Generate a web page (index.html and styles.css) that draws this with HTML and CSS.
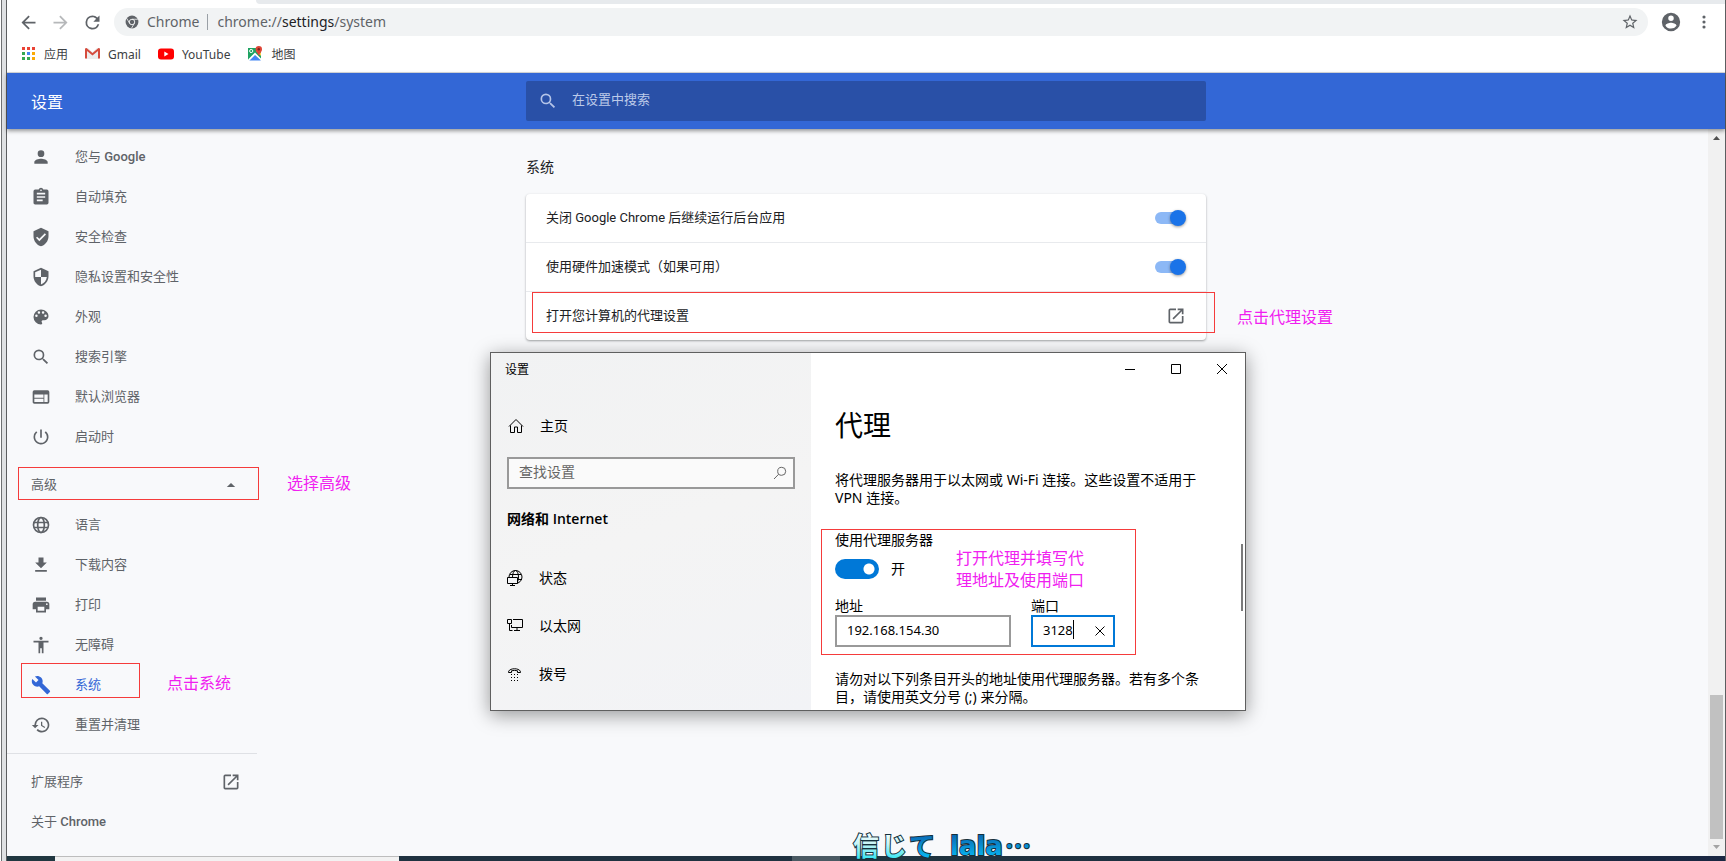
FILE: index.html
```html
<!DOCTYPE html>
<html lang="zh-CN">
<head>
<meta charset="utf-8">
<title>设置 - 系统</title>
<link rel="stylesheet" href="styles.css">
</head>
<body>
<div class="edge"></div>
<div class="browser">
  <div class="tabstrip"><div class="tab"></div><div class="tabs-rest"></div></div>
  <div class="toolbar">
    <button class="tool" aria-label="后退"><svg width="21" height="21" viewBox="0 0 24 24"><path d="M20 11H7.830l5.590-5.590L12 4l-8 8 8 8 1.410-1.410L7.830 13H20z"/></svg></button>
    <button class="tool faded" aria-label="前进"><svg width="21" height="21" viewBox="0 0 24 24"><path d="M12 4l-1.410 1.410L16.170 11H4v2h12.170l-5.580 5.590L12 20l8-8z"/></svg></button>
    <button class="tool" aria-label="重新加载"><svg width="21" height="21" viewBox="0 0 24 24"><path d="M17.650 6.350A7.960 7.960 0 0 0 12 4a8 8 0 1 0 7.730 10h-2.080A6 6 0 1 1 12 6c1.660 0 3.140.690 4.220 1.780L13 11h7V4z"/></svg></button>
    <div class="omnibox">
      <svg class="site" width="14" height="14" viewBox="0 0 24 24"><circle cx="12" cy="12" r="11"/><circle cx="12" cy="12" r="4.700" fill="none" stroke="#f1f3f4" stroke-width="1.600"/><path d="M12 7.300h10M8 14.400L3 5.800M16 14.300l-5 8.700" fill="none" stroke="#f1f3f4" stroke-width="1.400"/></svg>
      <span class="origin">Chrome</span>
      <span class="url">chrome://<b>settings</b>/system</span>
      <button class="tool star" aria-label="收藏"><svg width="18" height="18" viewBox="0 0 24 24"><path d="M22 9.240l-7.190-.620L12 2 9.190 8.630 2 9.240l5.460 4.730L5.820 21 12 17.270 18.180 21l-1.630-7.030L22 9.240zM12 15.400l-3.760 2.270 1-4.280-3.320-2.880 4.380-.380L12 6.100l1.710 4.040 4.380.380-3.320 2.880 1 4.280z"/></svg></button>
    </div>
    <button class="tool avatar" aria-label="用户"><svg width="22" height="22" viewBox="0 0 24 24"><path d="M12 2a10 10 0 1 0 0 20 10 10 0 0 0 0-20zm0 3a3 3 0 1 1 0 6 3 3 0 0 1 0-6zm0 14.200a7.200 7.200 0 0 1-6-3.220c.03-1.990 4-3.080 6-3.080s5.970 1.090 6 3.080a7.200 7.200 0 0 1-6 3.220z"/></svg></button>
    <button class="tool" aria-label="菜单"><svg width="20" height="20" viewBox="0 0 24 24"><circle cx="12" cy="6" r="1.900"/><circle cx="12" cy="12" r="1.900"/><circle cx="12" cy="18" r="1.900"/></svg></button>
  </div>
  <nav class="bookmarks">
    <a href="#"><svg width="14" height="14" viewBox="0 0 14 14"><path fill="#ea4335" d="M0 0h3v3H0zM5 0h3v3H5zM10 0h3v3h-3z"/><path fill="#34a853" d="M0 5h3v3H0zM0 10h3v3H0zM5 10h3v3H5z"/><path fill="#4285f4" d="M5 5h3v3H5z"/><path fill="#fbaa05" d="M10 5h3v3h-3zM10 10h3v3h-3z"/></svg>应用</a>
    <a href="#"><svg width="15" height="14" viewBox="0 0 15 14"><path fill="#eceded" d="M1 1h13v11H1z"/><path fill="#fff" d="M3 1h9L7.500 5z"/><path fill="#d54b3d" d="M0 2Q0 1 1.500 1L7.500 6l6-5Q15 1 15 2v9.500h-2V4L7.500 8.500 2 4v7.500H0z"/></svg>Gmail</a>
    <a href="#"><svg width="16" height="14" viewBox="0 0 16 14"><rect y="1.500" width="16" height="11" rx="3" fill="#f00"/><path fill="#fff" d="M6.300 4.600v4.800L10.500 7z"/></svg>YouTube</a>
    <a href="#"><svg width="16" height="16" viewBox="0 0 16 16"><path fill="#1ea362" d="M1 2h13v12H1z"/><path fill="#4285f4" d="M7.500 8.500l6.500 6H2z"/><path fill="#fff" d="M1 13.500l7-7 7 7-1 1-6-5.500-6 6z"/><path fill="#ffd04b" d="M9 5l5 5V7l-3-3z"/><circle cx="4.200" cy="5" r="1.600" fill="none" stroke="#fff"/><path fill="#de4436" d="M11.800 0a3.200 3.200 0 0 1 3.200 3.200c0 2.800-2.400 3.500-3.200 7-.8-3.500-3.200-4.200-3.200-7A3.200 3.200 0 0 1 11.800 0z"/><circle cx="11.800" cy="3.200" r="1.200" fill="#7a231d"/></svg>地图</a>
  </nav>

  <header class="header">
    <h1>设置</h1>
    <label class="search">
      <svg width="20" height="20" viewBox="0 0 24 24"><path d="M15.500 14h-.790l-.280-.270A6.470 6.470 0 0 0 16 9.500 6.500 6.500 0 1 0 9.500 16c1.610 0 3.090-.590 4.230-1.570l.270.280v.790l5 4.990L20.490 19zm-6 0a4.500 4.500 0 1 1 0-9 4.500 4.500 0 0 1 0 9z"/></svg>
      <input type="text" placeholder="在设置中搜索" aria-label="在设置中搜索">
    </label>
  </header>

  <div class="content">
    <nav class="menu">
      <a href="#"><svg viewBox="0 0 24 24"><path d="M12 12a4 4 0 1 0 0-8 4 4 0 0 0 0 8zm0 2c-2.670 0-8 1.340-8 4v2h16v-2c0-2.660-5.330-4-8-4z"/></svg><span>您与 <b>Google</b></span></a>
      <a href="#"><svg viewBox="0 0 24 24"><path d="M19 3h-4.180a3 3 0 0 0-5.640 0H5a2 2 0 0 0-2 2v14c0 1.100.9 2 2 2h14a2 2 0 0 0 2-2V5a2 2 0 0 0-2-2zm-7 0a1 1 0 1 1 0 2 1 1 0 0 1 0-2zm2 14H7v-2h7zm3-4H7v-2h10zm0-4H7V7h10z"/></svg><span>自动填充</span></a>
      <a href="#"><svg viewBox="0 0 24 24"><path d="M12 1L3 5v6c0 5.550 3.840 10.740 9 12 5.160-1.260 9-6.450 9-12V5zm-2 16l-4-4 1.410-1.410L10 14.170l6.590-6.590L18 9z"/></svg><span>安全检查</span></a>
      <a href="#"><svg viewBox="0 0 24 24"><path d="M12 1L3 5v6c0 5.550 3.840 10.740 9 12 5.160-1.260 9-6.450 9-12V5zm0 10.990h7c-.53 4.120-3.280 7.790-7 8.940V12H5V6.300l7-3.110z"/></svg><span>隐私设置和安全性</span></a>
      <a href="#"><svg viewBox="0 0 24 24"><path d="M12 3a9 9 0 0 0 0 18 1.500 1.500 0 0 0 1.110-2.490A1.500 1.500 0 0 1 14.230 16H16a5 5 0 0 0 5-5c0-4.420-4.030-8-9-8zm-5.500 9a1.500 1.500 0 1 1 0-3 1.500 1.500 0 0 1 0 3zm3-4a1.500 1.500 0 1 1 0-3 1.500 1.500 0 0 1 0 3zm5 0a1.500 1.500 0 1 1 0-3 1.500 1.500 0 0 1 0 3zm3 4a1.500 1.500 0 1 1 0-3 1.500 1.500 0 0 1 0 3z"/></svg><span>外观</span></a>
      <a href="#"><svg viewBox="0 0 24 24"><path d="M15.500 14h-.790l-.280-.270A6.470 6.470 0 0 0 16 9.500 6.500 6.500 0 1 0 9.500 16c1.610 0 3.090-.590 4.230-1.570l.270.280v.790l5 4.990L20.490 19zm-6 0a4.500 4.500 0 1 1 0-9 4.500 4.500 0 0 1 0 9z"/></svg><span>搜索引擎</span></a>
      <a href="#"><svg viewBox="0 0 24 24"><path d="M20 4H4a2 2 0 0 0-2 2v12c0 1.100.9 2 2 2h16a2 2 0 0 0 2-2V6a2 2 0 0 0-2-2zm-5 14H4v-4h11zm0-5H4V9h11zm5 5h-4V9h4z"/></svg><span>默认浏览器</span></a>
      <a href="#"><svg viewBox="0 0 24 24"><path d="M13 3h-2v10h2zm4.830 2.170l-1.420 1.420A6.920 6.920 0 0 1 19 12a7 7 0 1 1-11.420-5.420L6.170 5.170A8.930 8.930 0 0 0 3 12a9 9 0 1 0 14.830-6.830z"/></svg><span>启动时</span></a>
      <button class="advanced"><span>高级</span><svg viewBox="0 0 24 24"><path d="M7 14.500l5-5 5 5z"/></svg><i class="mark mark-advanced"></i><em class="note note-advanced">选择高级</em></button>
      <a href="#"><svg viewBox="0 0 24 24"><g fill="none" stroke="#5f6368" stroke-width="2"><circle cx="12" cy="12" r="9"/><ellipse cx="12" cy="12" rx="4" ry="9"/><path d="M3.500 9h17M3.500 15h17"/></g></svg><span>语言</span></a>
      <a href="#"><svg viewBox="0 0 24 24"><path d="M19 9h-4V3H9v6H5l7 7zM5 18v2h14v-2z"/></svg><span>下载内容</span></a>
      <a href="#"><svg viewBox="0 0 24 24"><path d="M19 8H5a3 3 0 0 0-3 3v6h4v4h12v-4h4v-6a3 3 0 0 0-3-3zm-3 11H8v-5h8zm3-7a1 1 0 1 1 0-2 1 1 0 0 1 0 2zm-1-9H6v4h12z"/></svg><span>打印</span></a>
      <a href="#"><svg viewBox="0 0 24 24"><path d="M12 2a2 2 0 1 1 0 4 2 2 0 0 1 0-4zm9 7h-6v13h-2v-6h-2v6H9V9H3V7h18z"/></svg><span>无障碍</span></a>
      <a href="#" class="current"><svg viewBox="0 0 24 24"><path d="M22.700 19l-9.100-9.100c.9-2.300.4-5-1.500-6.900-2-2-5-2.400-7.400-1.300L9 6 6 9 1.600 4.700C.4 7.100.9 10.100 2.900 12.100c1.900 1.900 4.600 2.400 6.900 1.500l9.100 9.100c.4.4 1 .4 1.400 0l2.300-2.300c.5-.4.5-1.100.1-1.400z"/></svg><span>系统</span><i class="mark mark-system"></i><em class="note note-system">点击系统</em></a>
      <a href="#"><svg viewBox="0 0 24 24"><path d="M13 3a9 9 0 0 0-9 9H1l3.890 3.890.07.140L9 12H6a7 7 0 1 1 2.060 4.940l-1.420 1.420A9 9 0 1 0 13 3zm-1 5v5l4.280 2.540.720-1.210-3.500-2.080V8z"/></svg><span>重置并清理</span></a>
      <hr>
      <a href="#" class="plain"><span>扩展程序</span><svg viewBox="0 0 24 24"><path d="M19 19H5V5h7V3H5a2 2 0 0 0-2 2v14a2 2 0 0 0 2 2h14a2 2 0 0 0 2-2v-7h-2zM14 3v2h3.590l-9.830 9.830 1.410 1.410L19 6.410V10h2V3z"/></svg></a>
      <a href="#" class="plain"><span>关于 <b>Chrome</b></span></a>
    </nav>

    <main class="section">
      <h2>系统</h2>
      <div class="card">
        <label class="row"><span>关闭 Google Chrome 后继续运行后台应用</span><input class="switch" type="checkbox" checked></label>
        <label class="row"><span>使用硬件加速模式（如果可用）</span><input class="switch" type="checkbox" checked></label>
        <a class="row" href="#"><span>打开您计算机的代理设置</span><svg width="20" height="20" viewBox="0 0 24 24"><path d="M19 19H5V5h7V3H5a2 2 0 0 0-2 2v14a2 2 0 0 0 2 2h14a2 2 0 0 0 2-2v-7h-2zM14 3v2h3.590l-9.830 9.830 1.410 1.410L19 6.410V10h2V3z"/></svg><i class="mark mark-proxy"></i><em class="note note-proxy">点击代理设置</em></a>
      </div>

      <section class="dialog">
        <div class="side">
          <div class="caption">设置</div>
          <a class="item home" href="#"><svg width="16" height="16" viewBox="0 0 16 16"><path d="M1 8.500L8 1.500l7 7M2.500 7.500v7h4V9h3v5.500h4v-7"/></svg>主页</a>
          <label class="find"><input type="text" placeholder="查找设置" aria-label="查找设置"><svg width="14" height="14" viewBox="0 0 14 14"><circle cx="8.700" cy="5.300" r="4"/><path d="M5.700 8.200L1 13"/></svg></label>
          <h3>网络和 Internet</h3>
          <a class="item" href="#"><svg width="16" height="16" viewBox="0 0 16 16"><circle cx="8.500" cy="7" r="6.500"/><ellipse cx="8.500" cy="7" rx="3" ry="6.500"/><path d="M3 4.500h11M8 9.500h7"/><path fill="#f3f4f6" d="M.5 7.500h10v6H.5z"/><path d="M5.500 13.500v2M3 15.500h5"/></svg>状态</a>
          <a class="item" href="#"><svg width="16" height="16" viewBox="0 0 16 16"><path d="M.5 1.500h4v4h-4zM2.500 5.500v7h3M6 1.500h9.500v8h-11V7M10 9.500v3M7 12.500h6"/></svg>以太网</a>
          <a class="item" href="#"><svg width="16" height="16" viewBox="0 0 16 16"><path d="M1.500 6.500C1 1.500 14 1.500 13.500 6.500h-3V4.800Q7.500 4 4.500 4.800v1.700z"/><path stroke-dasharray="1 2" d="M4 8.500h7M4 11.500h7M4 14.500h7"/></svg>拨号</a>
        </div>
        <div class="panel">
          <div class="winbuttons">
            <button aria-label="最小化"><svg width="12" height="12" viewBox="0 0 12 12"><path d="M1 6.500h10"/></svg></button>
            <button aria-label="最大化"><svg width="12" height="12" viewBox="0 0 12 12"><path d="M1.500 1.500h9v9h-9z"/></svg></button>
            <button aria-label="关闭"><svg width="12" height="12" viewBox="0 0 12 12"><path d="M1 1l10 10M11 1L1 11"/></svg></button>
          </div>
          <h2>代理</h2>
          <p>将代理服务器用于以太网或 Wi-Fi 连接。这些设置不适用于 VPN 连接。</p>
          <div class="form">
            <label for="use-proxy">使用代理服务器</label>
            <div class="onoff"><input id="use-proxy" type="checkbox" checked><span>开</span></div>
            <div class="fields">
              <div class="field address"><label for="address">地址</label><input id="address" type="text" value="192.168.154.30"></div>
              <div class="field port"><label for="port">端口</label><div class="portbox"><input id="port" type="text" value="3128"><i class="caret"></i><button aria-label="清除"><svg width="10" height="10" viewBox="0 0 10 10"><path d="M.5.5l9 9M9.500.5l-9 9"/></svg></button></div></div>
            </div>
            <i class="mark mark-form"></i>
            <em class="note note-form">打开代理并填写代<br>理地址及使用端口</em>
          </div>
          <p>请勿对以下列条目开头的地址使用代理服务器。若有多个条目，请使用英文分号 (;) 来分隔。</p>
          <i class="thumbline"></i>
        </div>
      </section>
    </main>

    <div class="scrollside">
      <div class="scrollbar">
        <svg width="7" height="4" viewBox="0 0 7 4"><path fill="#505050" d="M0 4L3.500 0 7 4z"/></svg>
        <div class="thumb"></div>
        <svg width="7" height="4" viewBox="0 0 7 4"><path fill="#a3a3a3" d="M0 0h7L3.500 4z"/></svg>
      </div>
    </div>
  </div>

  <footer class="taskbar">
    <div class="start"></div><div class="finder"></div><div class="apps"></div><div class="active"></div><div class="rest"></div>
    <svg class="lyrics" width="190" height="36" viewBox="0 0 190 36">
      <defs>
        <linearGradient id="sung" x1="0" y1="6" x2="0" y2="34" gradientUnits="userSpaceOnUse"><stop offset="0" stop-color="#fff"/><stop offset=".45" stop-color="#c8f4f6"/><stop offset="1" stop-color="#35e6f2"/></linearGradient>
        <linearGradient id="next" x1="0" y1="8" x2="0" y2="32" gradientUnits="userSpaceOnUse"><stop offset="0" stop-color="#0a62ae"/><stop offset="1" stop-color="#08b5f0"/></linearGradient>
      </defs>
      <text x="3" y="31" fill="url(#sung)">信</text>
      <text x="31" y="31" fill="url(#sung)">じ</text>
      <text x="59" y="31" fill="url(#next)">て</text>
      <text class="latin" x="100" y="30" fill="url(#next)">lala</text>
      <text x="155" y="31" fill="url(#next)">…</text>
    </svg>
  </footer>
</div>
</body>
</html>
```

FILE: styles.css
```css
* { box-sizing: border-box; }

body {
  margin: 0;
  height: 100vh;
  display: flex;
  overflow: hidden;
  background: #fff;
  color: #202124;
  font-family: Roboto, "Noto Sans CJK SC", sans-serif;
  font-size: 13px;
}

a { color: inherit; text-decoration: none; }
button { border: 0; padding: 0; background: none; font: inherit; color: inherit; }
input { font: inherit; color: inherit; }
svg { display: block; flex: none; }
h1, h2, h3, p { margin: 0; font-weight: 400; }

.edge {
  width: 6px;
  margin-left: 1px;
  flex: none;
  background: #dfe1e3;
  border-left: 1px solid #6e7072;
  border-right: 1px solid #5c5e60;
}

.browser {
  flex: 1;
  min-width: 0;
  display: flex;
  flex-direction: column;
  border-right: 1px solid #5c5e60;
}

/* Browser chrome */
.tabstrip { display: flex; height: 4px; flex: none; background: #fff; }
.tab { width: 249px; border-top-left-radius: 8px; background: #fff; }
.tabs-rest { flex: 1; background: #e7eaed; border-bottom-left-radius: 8px; }

.toolbar {
  display: flex;
  align-items: center;
  padding: 4px 11px 0 11px;
}
.tool { display: flex; flex: none; fill: #5f6368; margin-right: 11px; }
.faded { opacity: .45; }
.omnibox {
  flex: 1;
  height: 28px;
  margin-right: 12px;
  padding: 0 9px 0 11px;
  display: flex;
  align-items: center;
  border-radius: 14px;
  background: #f1f3f4;
  color: #5f6368;
  font: 14px "Noto Sans", sans-serif;
}
.site { fill: #5f6368; }
.origin { margin-left: 8px; padding-right: 8px; border-right: 1px solid #9aa0a6; line-height: 16px; }
.url { margin-left: 9px; line-height: 16px; }
.url b { font-weight: 400; color: #202124; }
.star { margin: 0 0 0 auto; }
.avatar { margin-right: 12px; }
.tool:last-child { margin-right: 0; }

.bookmarks {
  display: flex;
  align-items: center;
  gap: 17px;
  height: 37px;
  flex: none;
  padding: 0 15px;
  border-bottom: 1px solid #d8dadd;
  color: #3c4043;
  font: 12px "Noto Sans", "Noto Sans CJK SC", sans-serif;
}
.bookmarks a { display: flex; align-items: center; gap: 8px; }

/* Settings header */
.header, .content {
  display: grid;
  grid-template-columns: minmax(250px, 1fr) minmax(0, 680px) minmax(0, 1fr);
}
.header {
  position: relative;
  z-index: 1;
  height: 56px;
  flex: none;
  align-items: center;
  background: #3367d6;
  box-shadow: 0 2px 4px rgba(0, 0, 0, .4);
}
.header h1 { padding-left: 24px; color: #fff; font-size: 16px; }
.search {
  display: flex;
  align-items: center;
  gap: 14px;
  height: 40px;
  padding: 0 12px;
  border-radius: 2px;
  background: #2950a7;
  fill: #b4c4e8;
}
.search input { flex: 1; border: 0; outline: 0; padding: 0 0 3px; background: none; }
.search input::placeholder { color: #bccae9; opacity: 1; }

.content { flex: 1; min-height: 0; background: #f8f9fb; }

/* Side menu */
.menu { width: 250px; padding-top: 8px; color: #5f6368; }
.menu a, .advanced {
  position: relative;
  display: flex;
  align-items: center;
  gap: 24px;
  height: 40px;
  width: 100%;
  padding: 0 16px 0 24px;
  text-align: left;
}
.menu span, .row span { padding-bottom: 4px; }
.menu svg { width: 20px; height: 20px; fill: #5f6368; }
.menu b { font-weight: 500; }
.menu hr { height: 1px; margin: 8px 0; border: 0; background: #dfe1e5; }
.menu .current { color: #3367d6; }
.menu .current svg { fill: #3367d6; }
.menu .advanced, .menu .plain { justify-content: space-between; }
.menu .advanced { margin-top: 8px; }

/* Main card */
.section { position: relative; z-index: 1; }
.section > h2 { padding-top: 28px; font-size: 14px; line-height: 20px; }
.card {
  margin-top: 17px;
  border-radius: 4px;
  background: #fff;
  box-shadow: 0 1px 2px rgba(60, 64, 67, .35), 0 1px 3px rgba(60, 64, 67, .15);
}
.row {
  position: relative;
  display: flex;
  align-items: center;
  justify-content: space-between;
  height: 49px;
  padding: 0 20px;
  border-bottom: 1px solid #e8eaed;
}
.row:last-child { height: 48px; border: 0; }
.row svg { fill: #5f6368; }
.switch {
  appearance: none;
  position: relative;
  width: 31px;
  height: 16px;
  margin: 0;
}
.switch::before {
  content: "";
  position: absolute;
  left: 0;
  top: 2px;
  width: 28px;
  height: 12px;
  border-radius: 6px;
  background: #8cb8f6;
}
.switch::after {
  content: "";
  position: absolute;
  right: 0;
  top: 0;
  width: 16px;
  height: 16px;
  border-radius: 50%;
  background: #1a73e8;
  box-shadow: 0 1px 3px rgba(0, 0, 0, .4);
}

/* Annotations lying over the interface */
.mark { position: absolute; border: 1px solid #f53b3b; pointer-events: none; }
.note {
  position: absolute;
  color: #f020f0;
  font: 16px/22px "Noto Sans CJK SC", sans-serif;
  white-space: nowrap;
}
.mark-advanced { left: 11px; top: 2px; width: 241px; height: 33px; }
.note-advanced { left: 280px; top: 6px; }
.mark-system { left: 14px; top: -2px; width: 119px; height: 35px; }
.note-system { left: 160px; top: 6px; }
.mark-proxy { left: 6px; top: 0; width: 683px; height: 41px; }
.note-proxy { left: 711px; top: 13px; }
.mark-form { left: -14px; top: -2px; width: 315px; height: 126px; }
.note-form { left: 121px; top: 15px; }

/* System settings window */
.dialog {
  position: absolute;
  left: -36px;
  top: 223px;
  width: 756px;
  display: flex;
  border: 1px solid #5f5f5f;
  background: #fff;
  color: #000;
  box-shadow: 0 4px 18px rgba(0, 0, 0, .4);
  font-family: "Noto Sans", "Noto Sans CJK SC", sans-serif;
  font-size: 14px;
  line-height: 18px;
}
.side { width: 320px; padding: 0 16px 12px; background: linear-gradient(160deg, #f1f2f3, #f4f4f4 50%, #f2f3f6); }
.caption { margin-left: -2px; padding-top: 8px; font-size: 12px; }
.side svg { fill: none; stroke: #000; }
.item { display: flex; align-items: center; gap: 16px; height: 48px; }
.home { margin: 23px 0 7px; padding-left: 1px; }
.find {
  display: flex;
  align-items: center;
  height: 32px;
  padding: 0 6px 0 10px;
  border: 2px solid #999;
  background: #fafafa;
}
.find input { flex: 1; min-width: 0; border: 0; outline: 0; padding: 0 0 2px; background: none; }
.find input::placeholder { color: #666; opacity: 1; }
.find svg { stroke: #666; }
.side h3 { margin: 21px 0 26px; font-family: "Open Sans", "Noto Sans CJK SC", sans-serif; font-size: 14px; font-weight: 600; }

.panel { position: relative; flex: 1; min-width: 0; padding-left: 24px; }
.winbuttons { display: flex; justify-content: flex-end; }
.winbuttons button { display: flex; align-items: center; justify-content: center; width: 46px; height: 32px; }
.panel svg { fill: none; stroke: #000; }
.panel h2 { margin: 21px 0 27px; font-size: 28px; line-height: 38px; }
.panel p { width: 370px; }
.form { position: relative; margin: 24px 0 23px; }
.form label { display: block; }
.onoff { display: flex; align-items: center; gap: 12px; margin: 10px 0 18px; height: 20px; }
.onoff input {
  appearance: none;
  width: 44px;
  height: 20px;
  margin: 0;
  border-radius: 10px;
  background: radial-gradient(circle at 34px 10px, #fff 5px, #0078d7 6px);
}
.fields { display: flex; gap: 20px; }
.address { width: 176px; }
.port { width: 84px; }
.field input { width: 100%; padding: 0 10px 2px; height: 32px; border: 2px solid #999; outline: 0; font-size: 13px; }
.portbox { position: relative; display: flex; align-items: center; border: 2px solid #0078d7; height: 32px; padding-right: 8px; }
.portbox input { flex: 1; min-width: 0; height: 28px; border: 0; padding-right: 0; }
.caret { position: absolute; left: 40px; top: 3px; width: 1px; height: 19px; background: #000; }
.thumbline { position: absolute; right: 2px; top: 191px; width: 2px; height: 67px; background: #7a7a7a; }

/* Page scrollbar */
.scrollside { display: flex; justify-content: flex-end; }
.scrollbar {
  width: 17px;
  display: flex;
  flex-direction: column;
  align-items: center;
  padding: 7px 0;
  background: #f1f1f1;
}
.thumb { width: 13px; height: 144px; margin: auto 0 6px; background: #c1c1c1; }

/* Taskbar */
.taskbar { position: relative; display: flex; height: 5px; flex: none; background: #1f3240; }
.start { width: 48px; background: #203740; }
.finder { width: 344px; background: #f2f2f2; border-top: 1px solid #bdbdbd; }
.apps { width: 393px; }
.active { width: 48px; background: #4a5a63; }
.rest { flex: 1; background: linear-gradient(90deg, #20353f, #1a2742); }
.lyrics { position: absolute; left: 843px; bottom: 0; z-index: 2; overflow: visible; }
.lyrics text {
  font: 700 26px "Noto Sans CJK JP", sans-serif;
  stroke: #15303c;
  stroke-width: 2px;
  paint-order: stroke;
}
.lyrics .latin { font: 700 26px "DejaVu Sans", sans-serif; }
```
